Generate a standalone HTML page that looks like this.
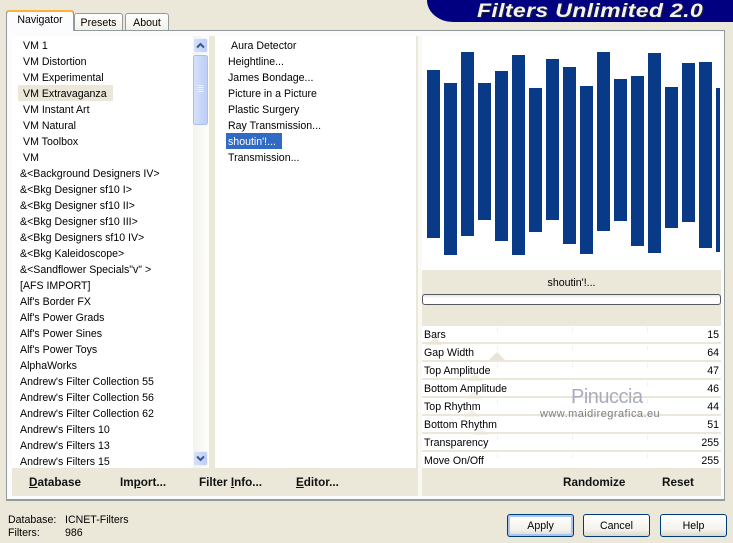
<!DOCTYPE html>
<html><head><meta charset="utf-8"><style>
html,body{margin:0;padding:0}
body{width:733px;height:543px;overflow:hidden;background:#ebe8da;position:relative;font:10.6px/16px "Liberation Sans",sans-serif;color:#000}
.a,.t{position:absolute;white-space:nowrap}
.t{height:16px;line-height:16px;margin-top:1px}
.tab{position:absolute;box-sizing:border-box;border:1px solid #919b9c;border-bottom:none;border-radius:3px 3px 0 0;background:linear-gradient(#fff,#f1efe6);text-align:center;line-height:18px}
.bar{position:absolute;background:#083a87;width:13px}
.row{position:absolute;left:422px;width:299px;height:16px;background:#fff;line-height:16px}
.row b{font-weight:normal;position:absolute;left:2px;top:1px}
.row i{font-style:normal;position:absolute;right:2px;top:1px}
.row u{position:absolute;top:1px;width:1px;height:5px;background:#f4f2ec}
.tri{position:absolute;width:0;height:0;border-left:8px solid transparent;border-right:8px solid transparent;border-bottom:8px solid #e9e5d6}
.bb{position:absolute;font-weight:bold;font-size:11.7px;line-height:16px;color:#111;white-space:nowrap}
.btn{position:absolute;box-sizing:border-box;top:514px;width:67px;height:23px;border:1px solid #003c74;border-radius:3px;background:linear-gradient(#fff,#f3f2ec 70%,#dcd8cc);text-align:center;line-height:22px}
</style></head><body>
<div class="a" style="left:427px;top:0;width:306px;height:22px;background:#000080;border-bottom-left-radius:26px 22px"></div>
<div class="a" style="left:477px;top:-1px;font:italic bold 19.5px/24px 'Liberation Sans',sans-serif;letter-spacing:.3px;color:#f4f4ee;text-shadow:1px 1px 0 #223;transform:scaleX(1.18);transform-origin:0 0">Filters Unlimited 2.0</div>

<div class="tab" style="left:74px;top:13px;width:49px;height:18px">Presets</div>
<div class="tab" style="left:125px;top:13px;width:44px;height:18px">About</div>

<div class="a" style="left:6px;top:30px;width:719px;height:471px;box-sizing:border-box;border:1px solid #919b9c;border-bottom-width:2px;background:#fcfcfe"></div>
<div class="a" style="left:12px;top:36px;width:197px;height:432px;background:#fff"></div>
<div class="a" style="left:209px;top:36px;width:6px;height:432px;background:#ebe8da"></div>
<div class="a" style="left:215px;top:36px;width:201px;height:432px;background:#fff"></div>
<div class="a" style="left:416px;top:36px;width:2px;height:460px;background:#ebe8da"></div>
<div class="a" style="left:418px;top:36px;width:4px;height:460px;background:#f9f9f5"></div>
<div class="a" style="left:12px;top:468px;width:404px;height:28px;background:#ebe8da"></div>
<div class="a" style="left:422px;top:468px;width:299px;height:28px;background:#ebe8da"></div>

<div class="tab" style="left:6px;top:10px;width:68px;height:21px;background:#fcfcfe;border-top:none;border-bottom:none;line-height:21px;box-shadow:inset 0 2px 0 #ffb038;z-index:2">Navigator</div>

<div class="a" style="left:18px;top:85px;width:95px;height:16px;background:#ebe8da"></div>
<div class="t" style="left:23px;top:37px">VM 1</div>
<div class="t" style="left:23px;top:53px">VM Distortion</div>
<div class="t" style="left:23px;top:69px">VM Experimental</div>
<div class="t" style="left:23px;top:85px">VM Extravaganza</div>
<div class="t" style="left:23px;top:101px">VM Instant Art</div>
<div class="t" style="left:23px;top:117px">VM Natural</div>
<div class="t" style="left:23px;top:133px">VM Toolbox</div>
<div class="t" style="left:23px;top:149px">VM</div>
<div class="t" style="left:20px;top:165px">&amp;&lt;Background Designers IV&gt;</div>
<div class="t" style="left:20px;top:181px">&amp;&lt;Bkg Designer sf10 I&gt;</div>
<div class="t" style="left:20px;top:197px">&amp;&lt;Bkg Designer sf10 II&gt;</div>
<div class="t" style="left:20px;top:213px">&amp;&lt;Bkg Designer sf10 III&gt;</div>
<div class="t" style="left:20px;top:229px">&amp;&lt;Bkg Designers sf10 IV&gt;</div>
<div class="t" style="left:20px;top:245px">&amp;&lt;Bkg Kaleidoscope&gt;</div>
<div class="t" style="left:20px;top:261px">&amp;&lt;Sandflower Specials"v" &gt;</div>
<div class="t" style="left:20px;top:277px">[AFS IMPORT]</div>
<div class="t" style="left:20px;top:293px">Alf's Border FX</div>
<div class="t" style="left:20px;top:309px">Alf's Power Grads</div>
<div class="t" style="left:20px;top:325px">Alf's Power Sines</div>
<div class="t" style="left:20px;top:341px">Alf's Power Toys</div>
<div class="t" style="left:20px;top:357px">AlphaWorks</div>
<div class="t" style="left:20px;top:373px">Andrew's Filter Collection 55</div>
<div class="t" style="left:20px;top:389px">Andrew's Filter Collection 56</div>
<div class="t" style="left:20px;top:405px">Andrew's Filter Collection 62</div>
<div class="t" style="left:20px;top:421px">Andrew's Filters 10</div>
<div class="t" style="left:20px;top:437px">Andrew's Filters 13</div>
<div class="t" style="left:20px;top:453px;height:14px;overflow:hidden">Andrew's Filters 15</div>

<div class="a" style="left:193px;top:36px;width:16px;height:432px;background:linear-gradient(90deg,#f3f2ec,#fefefb)"></div>
<svg class="a" style="left:193px;top:36px" width="16" height="432" viewBox="0 0 16 432">
<defs><linearGradient id="g" x1="0" x2="1" y1="0" y2="0"><stop offset="0" stop-color="#d6e1fb"/><stop offset="1" stop-color="#bccdf6"/></linearGradient></defs>
<rect x=".5" y="2.5" width="14" height="14" rx="2" fill="url(#g)" stroke="#eef3fe"/>
<path d="M4 11.5l3.5-3.5 3.5 3.5" fill="none" stroke="#3c5587" stroke-width="2"/>
<rect x=".5" y="19.5" width="14" height="69" rx="2" fill="url(#g)" stroke="#a9bfef"/>
<path d="M4.5 49.5h6M4.5 51.5h6M4.5 53.5h6M4.5 55.5h6" stroke="#eef3fe" stroke-width="1"/>
<rect x=".5" y="415.5" width="14" height="14" rx="2" fill="url(#g)" stroke="#eef3fe"/>
<path d="M4 420.5l3.5 3.5 3.5-3.5" fill="none" stroke="#3c5587" stroke-width="2"/>
</svg>

<div class="a" style="left:226px;top:133px;width:56px;height:16px;background:#316ac5"></div>
<div class="t" style="left:231px;top:37px">Aura Detector</div>
<div class="t" style="left:228px;top:53px">Heightline...</div>
<div class="t" style="left:228px;top:69px">James Bondage...</div>
<div class="t" style="left:228px;top:85px">Picture in a Picture</div>
<div class="t" style="left:228px;top:101px">Plastic Surgery</div>
<div class="t" style="left:228px;top:117px">Ray Transmission...</div>
<div class="t" style="left:228px;top:133px;color:#fff">shoutin'!...</div>
<div class="t" style="left:228px;top:149px">Transmission...</div>

<div class="a" style="left:422px;top:36px;width:299px;height:234px;background:#fff"></div>
<div class="bar" style="left:427px;top:70px;height:168px"></div>
<div class="bar" style="left:444px;top:83px;height:172px"></div>
<div class="bar" style="left:461px;top:52px;height:184px"></div>
<div class="bar" style="left:478px;top:83px;height:137px"></div>
<div class="bar" style="left:495px;top:71px;height:170px"></div>
<div class="bar" style="left:512px;top:55px;height:200px"></div>
<div class="bar" style="left:529px;top:88px;height:144px"></div>
<div class="bar" style="left:546px;top:59px;height:161px"></div>
<div class="bar" style="left:563px;top:67px;height:177px"></div>
<div class="bar" style="left:580px;top:86px;height:168px"></div>
<div class="bar" style="left:597px;top:52px;height:179px"></div>
<div class="bar" style="left:614px;top:79px;height:142px"></div>
<div class="bar" style="left:631px;top:76px;height:170px"></div>
<div class="bar" style="left:648px;top:53px;height:200px"></div>
<div class="bar" style="left:665px;top:87px;height:141px"></div>
<div class="bar" style="left:682px;top:63px;height:159px"></div>
<div class="bar" style="left:699px;top:62px;height:186px"></div>
<div class="bar" style="left:716px;top:88px;height:164px;width:4px"></div>

<div class="a" style="left:422px;top:270px;width:299px;height:56px;background:#ebe8da"></div>
<div class="a" style="left:422px;top:275px;width:299px;text-align:center">shoutin'!...</div>
<div class="a" style="left:422px;top:294px;width:299px;height:11px;box-sizing:border-box;border:1px solid #55585c;border-radius:3px;background:linear-gradient(#e8e8ec,#fff 40%)"></div>

<div class="a" style="left:422px;top:326px;width:299px;height:142px;background:#ebe8da"></div>
<div class="row" style="top:326px"><i>15</i><u style="left:75px"></u><u style="left:150px"></u><u style="left:225px"></u></div>
<div class="row" style="top:344px"><i>64</i><u style="left:75px"></u><u style="left:150px"></u><u style="left:225px"></u></div>
<div class="row" style="top:362px"><i>47</i><u style="left:75px"></u><u style="left:150px"></u><u style="left:225px"></u></div>
<div class="row" style="top:380px"><i>46</i><u style="left:75px"></u><u style="left:150px"></u><u style="left:225px"></u></div>
<div class="row" style="top:398px"><i>44</i><u style="left:75px"></u><u style="left:150px"></u><u style="left:225px"></u></div>
<div class="row" style="top:416px"><i>51</i><u style="left:75px"></u><u style="left:150px"></u><u style="left:225px"></u></div>
<div class="row" style="top:434px"><i>255</i><u style="left:75px"></u><u style="left:150px"></u><u style="left:225px"></u></div>
<div class="row" style="top:452px"><i>255</i><u style="left:75px"></u><u style="left:150px"></u><u style="left:225px"></u></div>
<div class="tri" style="left:489px;top:352px"></div>
<div class="tri" style="left:427px;top:337px;opacity:.7"></div>
<div class="tri" style="left:467px;top:373px;opacity:.7"></div>
<div class="tri" style="left:466px;top:391px;opacity:.5"></div>
<div class="tri" style="left:464px;top:409px;opacity:.5"></div>
<div class="tri" style="left:473px;top:427px;opacity:.5"></div>
<div class="row" style="top:326px;background:none"><b>Bars</b></div>
<div class="row" style="top:344px;background:none"><b>Gap Width</b></div>
<div class="row" style="top:362px;background:none"><b>Top Amplitude</b></div>
<div class="row" style="top:380px;background:none"><b>Bottom Amplitude</b></div>
<div class="row" style="top:398px;background:none"><b>Top Rhythm</b></div>
<div class="row" style="top:416px;background:none"><b>Bottom Rhythm</b></div>
<div class="row" style="top:434px;background:none"><b>Transparency</b></div>
<div class="row" style="top:452px;background:none"><b>Move On/Off</b></div>

<div class="a" style="left:571px;top:385px;font:20px/24px 'Liberation Sans',sans-serif;letter-spacing:-.5px;color:#aaabbd">Pinuccia</div>
<div class="a" style="left:540px;top:407px;font:11px/14px 'Liberation Sans',sans-serif;letter-spacing:.45px;color:#7d7e85">www.maidiregrafica.eu</div>

<div class="bb" style="left:29px;top:475px"><span style="text-decoration:underline">D</span>atabase</div>
<div class="bb" style="left:120px;top:475px">Im<span style="text-decoration:underline">p</span>ort...</div>
<div class="bb" style="left:199px;top:475px">Filter <span style="text-decoration:underline">I</span>nfo...</div>
<div class="bb" style="left:296px;top:475px"><span style="text-decoration:underline">E</span>ditor...</div>
<div class="bb" style="left:563px;top:475px">Randomize</div>
<div class="bb" style="left:662px;top:475px">Reset</div>

<div class="t" style="left:8px;top:511px">Database:</div>
<div class="t" style="left:65px;top:511px">ICNET-Filters</div>
<div class="t" style="left:8px;top:524px">Filters:</div>
<div class="t" style="left:65px;top:524px">986</div>

<div class="btn" style="left:507px;box-shadow:inset 0 0 0 2px #a9c4ee">Apply</div>
<div class="btn" style="left:583px">Cancel</div>
<div class="btn" style="left:660px">Help</div>
</body></html>
